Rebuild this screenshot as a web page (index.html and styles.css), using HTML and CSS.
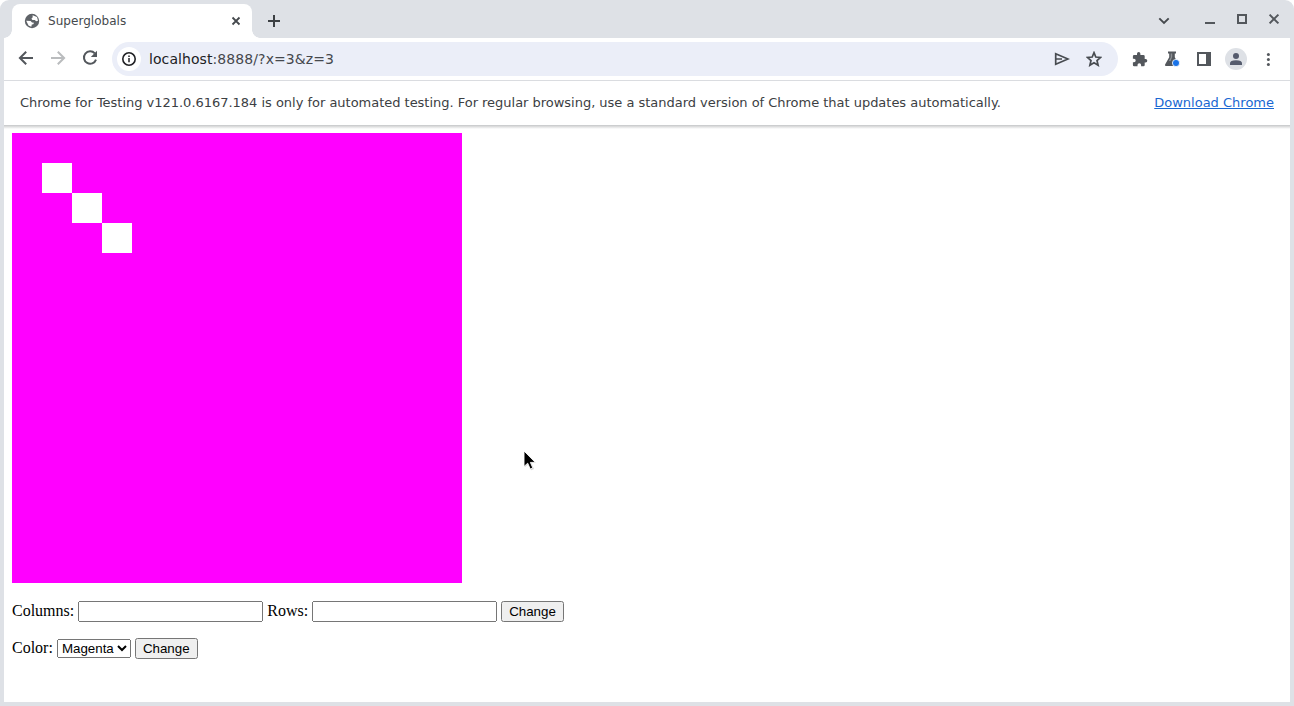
FILE: index.html
```html
<!DOCTYPE html>
<html lang="en">
<head>
<meta charset="utf-8">
<title>Superglobals</title>
<link rel="stylesheet" href="styles.css">
</head>
<body>
<div class="window">
  <header class="tabstrip">
    <div class="tab">
      <svg class="favicon" viewBox="0 0 16 16"><circle cx="8" cy="8" r="7.2" fill="#5f6368"/><path d="M8.6 2.2 13 3.9 14 7.7 12.1 8.2 10.8 6.9 8.4 7 7.4 5.7 8.7 4.2ZM2.2 7.8 6.6 8 8 9.5 10 9.7 9.3 11.2 7.8 11.5 7.3 13.8 4.5 12.5Z" fill="#fff"/></svg>
      <span class="tab-title">Superglobals</span>
      <svg class="tab-close" viewBox="0 0 16 16"><path d="M4.5 4.5 11.5 11.5M11.5 4.5 4.5 11.5" stroke="#45494d" stroke-width="1.8"/></svg>
    </div>
    <svg class="new-tab" viewBox="0 0 16 16"><path d="M8 2V14M2 8H14" stroke="#3c4043" stroke-width="2"/></svg>
    <div class="window-buttons">
      <svg viewBox="0 0 16 16"><path d="M3.3 6.3 8 11 12.7 6.3" fill="none" stroke="#45494d" stroke-width="1.9"/></svg>
      <svg class="minimize" viewBox="0 0 16 16"><path d="M3 11H13" stroke="#53575c" stroke-width="2"/></svg>
      <svg viewBox="0 0 16 16"><path d="M4 3H12V11H4Z" fill="none" stroke="#53575c" stroke-width="2"/></svg>
      <svg viewBox="0 0 16 16"><path d="M3.6 2.6 12.4 11.4M12.4 2.6 3.6 11.4" stroke="#53575c" stroke-width="2"/></svg>
    </div>
  </header>
  <nav class="toolbar">
    <div class="nav-buttons">
      <svg viewBox="0 0 16 16"><path d="M15 8H2.2M8.2 1.7 1.9 8 8.2 14.3" fill="none" stroke="#53575c" stroke-width="2"/></svg>
      <svg viewBox="0 0 16 16"><path d="M1 8H13.8M7.8 1.7 14.1 8 7.8 14.3" fill="none" stroke="#babcbe" stroke-width="2"/></svg>
      <svg viewBox="0 0 16 16"><path d="M12.8 3.4A6.2 6.2 0 1 0 14 9.6" fill="none" stroke="#53575c" stroke-width="2"/><path d="M15 .8V7H8.8Z" fill="#53575c"/></svg>
    </div>
    <div class="omnibox">
      <span class="site-info"><svg viewBox="0 0 16 16"><circle cx="8" cy="8" r="6.2" fill="none" stroke="#202124" stroke-width="1.6"/><path d="M8 7V11.3M8 4.4V6" stroke="#202124" stroke-width="1.5"/></svg></span>
      <span class="url"><span class="host">localhost</span>:8888/?x=3&amp;z=3</span>
      <svg class="send" viewBox="0 0 16 16"><path d="M1.7 2.7 14 8 1.7 13.3Z" fill="none" stroke="#474b50" stroke-width="1.7"/><path d="M2 8H8" stroke="#474b50" stroke-width="1.5"/></svg>
      <svg class="star" viewBox="0 0 16 16"><path d="M8 1.7 9.8 6 14.5 6.4 11 9.5 12.1 14.2 8 11.7 3.9 14.2 5 9.5 1.5 6.4 6.2 6Z" fill="none" stroke="#474b50" stroke-width="1.7"/></svg>
    </div>
    <div class="actions">
      <svg viewBox="0 0 16 16"><path d="M6.7 1.1a1.7 1.7 0 0 1 1.7 1.7V4h3q1.3 0 1.3 1.3v2.8h.9a1.7 1.7 0 0 1 0 3.4h-.9v2.4q0 1.3-1.3 1.3H9.1V14.1a1.8 1.8 0 0 0-3.6 0v1.1H2.2q-1.3 0-1.3-1.3v-2.7H2a1.7 1.7 0 0 0 0-3.4H.9V5.3Q.9 4 2.2 4H5V2.8a1.7 1.7 0 0 1 1.7-1.7Z" fill="#53575c"/></svg>
      <svg viewBox="0 0 16 16"><path d="M4 .5H12V2.5H10.8V6.2L14.7 13.4Q15.2 15 13.5 15H2.2Q.4 15 1.1 13.4L5.2 6.2V2.5H4Z" fill="#53575c"/><path d="M6.7 2.5V6.6L4.8 10H6.5L8.2 6V2.5Z" fill="#8c9095"/><circle cx="12" cy="12" r="3.6" fill="#1a73e8" stroke="#fff" stroke-width=".8"/></svg>
      <svg viewBox="0 0 16 16"><path d="M1 1H15V15H1ZM3 3V13H10V3Z" fill="#53575c" fill-rule="evenodd"/></svg>
      <svg class="avatar" viewBox="0 0 22 22"><circle cx="11" cy="11" r="11" fill="#dee1e6"/><circle cx="11" cy="8" r="3" fill="#555b6d"/><path d="M5 17V15.2Q5 12.3 11 12.3T17 15.2V17Z" fill="#555b6d"/></svg>
      <svg viewBox="0 0 16 16"><g fill="#53575c"><circle cx="8.4" cy="3.4" r="1.5"/><circle cx="8.4" cy="8.5" r="1.5"/><circle cx="8.4" cy="13.5" r="1.5"/></g></svg>
    </div>
  </nav>
  <div class="infobar">
    <span class="notice">Chrome for Testing v121.0.6167.184 is only for automated testing. For regular browsing, use a standard version of Chrome that updates automatically.</span>
    <a class="download" href="#">Download Chrome</a>
  </div>
  <main class="page">
    <svg class="grid" viewBox="0 0 15 15" shape-rendering="crispEdges"><rect width="15" height="15" fill="#f0f"/><path d="M1 1h1v1h-1zM2 2h1v1h-1zM3 3h1v1h-1z" fill="#fff"/></svg>
    <form class="size-form">Columns: <input class="field" type="text"> Rows: <input class="field" type="text"> <button type="button">Change</button></form>
    <form class="color-form">Color: <select><option>Magenta</option></select> <button type="button">Change</button></form>
  </main>
</div>
<svg class="cursor" viewBox="0 0 14 22"><path d="M2 2V17L5.4 14 8 20.2 11 19 8.4 13H13Z" fill="#aaa" opacity=".5"/><path d="M1 1V16.5L4.7 13.2 7.2 19 9.8 17.9 7.4 12.4H12.3Z" fill="#000" stroke="#fff" stroke-width=".9"/></svg>
</body>
</html>
```
FILE: styles.css
```css
* { box-sizing: border-box; }
body { margin: 0; background: #fff; font-family: "DejaVu Sans", sans-serif; }
svg { display: block; width: 16px; height: 16px; flex: none; }
.window {
  display: flex;
  flex-direction: column;
  height: 706px;
  padding: 0 4px 4px;
  background: #dee1e6;
  border-radius: 9px 9px 0 0;
  overflow: hidden;
}
.tabstrip { display: flex; height: 38px; padding: 4px 8px 0; flex: none; }
.tab {
  position: relative;
  display: flex;
  align-items: center;
  width: 240px;
  height: 34px;
  padding: 0 8px 0 12px;
  background: #fff;
  border-radius: 8px 8px 0 0;
}
.tab::before, .tab::after {
  content: "";
  position: absolute;
  bottom: 0;
  width: 8px;
  height: 8px;
}
.tab::before { left: -8px; background: radial-gradient(circle at 0 0, transparent 7.5px, #fff 8px); }
.tab::after { right: -8px; background: radial-gradient(circle at 100% 0, transparent 7.5px, #fff 8px); }
.tab-title { flex: 1; margin-left: 8px; font-size: 12px; line-height: 16px; letter-spacing: 0.04px; color: #45494d; }
.new-tab { margin: 9px 0 0 14px; }
.window-buttons { display: flex; gap: 16px; margin: 8px 0 0 auto; }
.minimize { margin-left: 14px; }
.toolbar { display: flex; height: 43px; padding: 4px 14px 0; background: #fff; border-bottom: 1px solid #dadce0; flex: none; }
.nav-buttons { display: flex; gap: 16px; padding-top: 8px; }
.omnibox {
  display: flex;
  align-items: center;
  width: 1006px;
  height: 34px;
  margin-left: 14px;
  padding: 0 16px 0 5px;
  background: #ebeef8;
  border-radius: 17px;
}
.site-info { display: grid; place-items: center; width: 24px; height: 24px; border-radius: 50%; background: #fff; }
.url { flex: 1; margin-left: 8px; font-size: 14px; letter-spacing: 0.08px; color: #45484d; }
.host { color: #202124; }
.star { margin-left: 16px; }
.actions { display: flex; align-items: center; gap: 16px; height: 33px; margin-left: 14px; }
.avatar { width: 22px; height: 22px; margin: 0 -3px; }
.infobar {
  display: flex;
  align-items: center;
  justify-content: space-between;
  height: 44px;
  padding: 0 16px 2px;
  background: #fff;
  font-size: 13px;
  color: #3c4043;
  flex: none;
}
.notice { letter-spacing: -0.02px; }
.download { color: #1967d2; }
.page {
  flex: 1;
  padding: 8px;
  background: linear-gradient(#c4c6c8, #d4d5d6 1px, #fff 4px) top / 100% 4px no-repeat #fff;
  font: 16px "Liberation Serif", serif;
  color: #000;
}
.grid { width: 450px; height: 450px; }
.size-form { margin: 18px 0 16px; }
.color-form { margin: 0; }
.field { width: 185px; height: 21px; }
.cursor { position: absolute; left: 523px; top: 450px; width: 14px; height: 22px; }
```
